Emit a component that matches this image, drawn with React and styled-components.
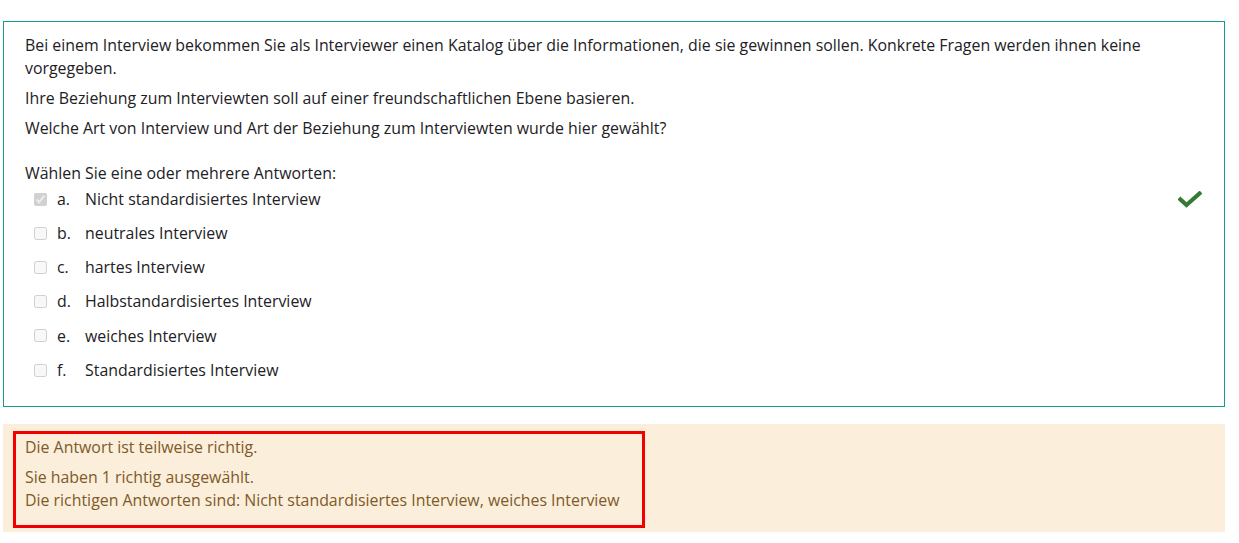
import React from 'react';
import styled, { createGlobalStyle } from 'styled-components';

const GlobalStyle = createGlobalStyle`
  body {
    margin: 0;
    background: #fff;
    font-family: 'Open Sans', 'Noto Sans', sans-serif;
    font-size: 15.9px;
    line-height: 22.5px;
    color: #1d2125;
  }
`;

const Page = styled.div`
  padding: 21px 14px 12px 3px;
`;

const Formulation = styled.div`
  border: 1px solid #129a8c;
  padding: 12px 21px 19px 21px;
`;

const QText = styled.div`
  margin-bottom: 23px;
`;

const Para = styled.p`
  margin: 0 0 7.5px 0;
`;

const Prompt = styled.div`
  margin-bottom: -2.5px;
`;

const AnswerList = styled.div`
  display: flex;
  flex-direction: column;
`;

const AnswerRow = styled.div`
  display: flex;
  align-items: center;
  padding: 5.85px 0 5.85px 9px;
`;

const Box = styled.input`
  width: 13px;
  height: 13px;
  margin: 0 10px 0 0;
  flex: none;
`;

const Letter = styled.span`
  width: 28px;
  flex: none;
`;

const Label = styled.span`
  flex: 1;
`;

const Tick = styled.svg`
  width: 24px;
  height: 17px;
  flex: none;
  margin-right: 1px;
`;

const Outcome = styled.div`
  margin-top: 17px;
  background: #fbeedb;
  color: #7d5a29;
  padding: 7px 10px 4px 10px;
`;

const Highlight = styled.div`
  width: 632px;
  box-sizing: border-box;
  border: 3px solid #f20000;
  padding: 2px 20px 14px 9px;
`;

const FbLine = styled.div`
  margin-bottom: ${(p) => (p.$gap ? '7.5px' : '0')};
`;

const answers = [
  { n: 'a.', text: 'Nicht standardisiertes Interview', checked: true, correct: true },
  { n: 'b.', text: 'neutrales Interview' },
  { n: 'c.', text: 'hartes Interview' },
  { n: 'd.', text: 'Halbstandardisiertes Interview' },
  { n: 'e.', text: 'weiches Interview' },
  { n: 'f.', text: 'Standardisiertes Interview' },
];

const CheckIcon = () => (
  <Tick viewBox="0 0 24 17">
    <path
      d="M2.5 8.5 L8.5 14 L21.5 2.5"
      fill="none"
      stroke="#357a32"
      strokeWidth="4.2"
      strokeLinecap="square"
      strokeLinejoin="miter"
    />
  </Tick>
);

export default function App() {
  return (
    <Page>
      <GlobalStyle />
      <Formulation>
        <QText>
          <Para>
            Bei einem Interview bekommen Sie als Interviewer einen Katalog über die
            Informationen, die sie gewinnen sollen. Konkrete Fragen werden ihnen keine
            vorgegeben.
          </Para>
          <Para>Ihre Beziehung zum Interviewten soll auf einer freundschaftlichen Ebene basieren.</Para>
          <Para>Welche Art von Interview und Art der Beziehung zum Interviewten wurde hier gewählt?</Para>
        </QText>
        <Prompt>Wählen Sie eine oder mehrere Antworten:</Prompt>
        <AnswerList>
          {answers.map((a) => (
            <AnswerRow key={a.n}>
              <Box type="checkbox" disabled checked={!!a.checked} readOnly />
              <Letter>{a.n}</Letter>
              <Label>{a.text}</Label>
              {a.correct && <CheckIcon />}
            </AnswerRow>
          ))}
        </AnswerList>
      </Formulation>
      <Outcome>
        <Highlight>
          <FbLine $gap>Die Antwort ist teilweise richtig.</FbLine>
          <FbLine>Sie haben 1 richtig ausgewählt.</FbLine>
          <FbLine>Die richtigen Antworten sind: Nicht standardisiertes Interview, weiches Interview</FbLine>
        </Highlight>
      </Outcome>
    </Page>
  );
}
